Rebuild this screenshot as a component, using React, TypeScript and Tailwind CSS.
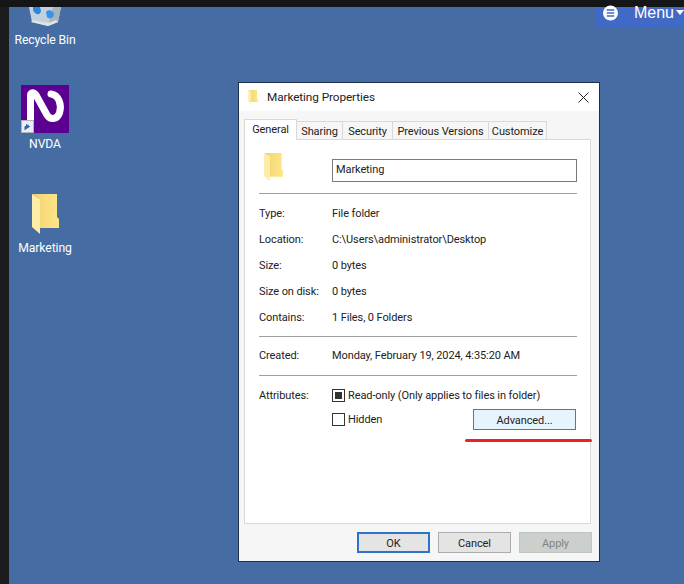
import { useId } from 'react';

const FolderIcon = ({ className }: { className: string }) => {
  const id = useId();
  return (
    <svg viewBox="0 0 27 40" className={className}>
      <defs>
        <linearGradient id={id} x1="0" x2="1" y1="0" y2="0">
          <stop offset="0" stopColor="#f0cd68" />
          <stop offset="0.45" stopColor="#f8dc7c" />
          <stop offset="1" stopColor="#fde588" />
        </linearGradient>
      </defs>
      <path d="M0 0H25V23L27 25V34H8V5Z" fill={`url(#${id})`} />
      <path d="M0 0L8 5V40L0 33Z" fill="#fdeda6" />
    </svg>
  );
};

const NvdaIcon = () => (
  <svg viewBox="0 0 48 48" className="w-12 h-12">
    <rect width="48" height="48" fill="#5c0091" />
    <path
      d="M9.5 36V10C9.5 7 13 7 15 10L26 30C29 35 36 35 38.5 28C41 20 38 10 30 9"
      fill="none"
      stroke="#fff"
      strokeWidth="7"
      strokeLinecap="round"
      strokeLinejoin="round"
    />
    <rect x="0.5" y="35.5" width="12" height="12" fill="#e8eef4" stroke="#b5b5b5" />
    <path d="M4 45V41.5H7M5.5 39.5L8.5 41.5L5.5 43.5Z" fill="#2f62b5" stroke="#2f62b5" />
  </svg>
);

const RecycleIcon = () => (
  <svg viewBox="0 0 32 19" className="w-[32px] h-[19px]">
    <path d="M0 0H32L29 15L19 19L3 15Z" fill="#c3d1dc" />
    <path d="M19 19L29 15L32 0H24Z" fill="#a5b4bf" />
    <path d="M2 15L19 19L29 15L27 13L19 16L4 13Z" fill="#dfe3e2" />
    <path d="M4 0H11L12 4C11 9 6 8 4 3Z" fill="#2e86e0" />
    <path d="M17 5C19 2 24 3 25 7C25 11 20 13 18 10Z" fill="#3c92e6" />
  </svg>
);

const DeskItem = ({ label, pos, gap, children }: { label: string; pos: string; gap: string; children: React.ReactNode }) => (
  <div className={`absolute flex flex-col items-center w-[90px] text-white text-[12.2px] ${pos}`}>
    {children}
    <span className={`leading-[16px] ${gap}`}>{label}</span>
  </div>
);

const rows = [
  ['Type:', 'File folder'],
  ['Location:', 'C:\\Users\\administrator\\Desktop'],
  ['Size:', '0 bytes'],
  ['Size on disk:', '0 bytes'],
  ['Contains:', '1 Files, 0 Folders'],
];

const tabs = [
  ['Sharing', 'w-[46px]'],
  ['Security', 'w-[50px]'],
  ['Previous Versions', 'w-[96px]'],
  ['Customize', 'w-[58px]'],
];

const Row = ({ label, value }: { label: string; value: string }) => (
  <div className="flex items-center h-[26px] pt-[2px]">
    <span className="w-[73px] shrink-0">{label}</span>
    <span>{value}</span>
  </div>
);

export default function App() {
  return (
    <div
      className="w-[684px] h-[584px] flex flex-col overflow-hidden bg-[#17181a] text-[#222] text-[11px] tracking-[-0.1px]"
      style={{ fontFamily: 'Roboto, "Noto Sans", sans-serif' }}
    >
      <div className="h-[7px] shrink-0 bg-[#141517]" />
      <div className="flex flex-1">
        <div className="w-[9px] shrink-0 bg-[#1b1c1e]" />
        <div className="relative flex-1 bg-[#466da3]">
          <DeskItem label="Recycle Bin" pos="left-[-9px] top-0" gap="mt-[6px]">
            <RecycleIcon />
          </DeskItem>

          <DeskItem label="NVDA" pos="left-[-9px] top-[78px]" gap="mt-[3px]">
            <NvdaIcon />
          </DeskItem>

          <DeskItem label="Marketing" pos="left-[-9px] top-[187px]" gap="mt-[6px]">
            <FolderIcon className="w-[27px] h-[40px]" />
          </DeskItem>

          {/* Menu tab */}
          <div className="absolute right-0 top-0 w-[89px] h-[20px] bg-[#4169c6] flex items-start pl-[8px] text-white tracking-normal">
            <svg viewBox="0 0 16 16" className="w-[16px] h-[16px] mt-[-2px]">
              <circle cx="8" cy="8" r="8" fill="#fff" />
              <path d="M4 4.8H12M4 8H12M4 11.2H12" stroke="#4169c6" strokeWidth="1.6" />
            </svg>
            <span
              className="ml-[16px] mt-[-4px] text-[16px] leading-[20px]"
              style={{ fontFamily: '"Liberation Sans", sans-serif' }}
            >
              Menu
            </span>
            <span className="ml-[2px] mt-[3px] w-0 h-0 border-x-[4px] border-x-transparent border-t-[5px] border-t-white" />
          </div>

          {/* Properties window */}
          <div className="absolute left-[229px] top-[75px] w-[362px] h-[480px] flex flex-col border border-[#1e2f4a] bg-[#f6f6f6]">
            <div className="h-[28px] shrink-0 flex items-center bg-white pl-[9px] pr-[10px]">
              <FolderIcon className="w-[10px] h-[14px]" />
              <span className="ml-[9px] pt-[2px] text-[11.8px] text-[#222]">Marketing Properties</span>
              <svg viewBox="0 0 11 11" className="w-[11px] h-[11px] ml-auto">
                <path d="M0.5 0.5L10.5 10.5M10.5 0.5L0.5 10.5" stroke="#222" strokeWidth="1" />
              </svg>
            </div>

            <div className="flex flex-col flex-1 px-[5px] pt-[8px]">
              <div className="flex items-end h-[20px] relative z-10">
                <div className="w-[53px] h-[21px] mb-[-1px] bg-white border border-b-0 border-[#d9d9d9] text-center leading-[19px]">
                  General
                </div>
                {tabs.map(([name, w]) => (
                  <div
                    key={name}
                    className={`${w} h-[18px] border border-l-0 border-b-0 border-[#d9d9d9] bg-[#f6f6f6] text-center leading-[20px] whitespace-nowrap`}
                  >
                    {name}
                  </div>
                ))}
              </div>

              <div className="w-[347px] h-[385px] bg-white border border-[#d9d9d9] pl-[14px] pr-[13px] relative">
                <div className="flex items-center h-[53px]">
                  <div className="w-[73px] shrink-0 pl-[5px]">
                    <FolderIcon className="w-[19px] h-[28px]" />
                  </div>
                  <div className="w-[246px] h-[23px] mt-[7px] border border-[#7a7a7a] pl-[3px] leading-[19px]">Marketing</div>
                </div>
                <div className="h-px bg-[#a0a0a0] w-[318px]" />

                <div className="py-[6px]">
                  {rows.map(([l, v]) => (
                    <Row key={l} label={l} value={v} />
                  ))}
                </div>
                <div className="h-px bg-[#a0a0a0] w-[318px]" />

                <div className="pt-[5px] pb-[7px]">
                  <Row label="Created:" value="Monday, February 19, 2024, 4:35:20 AM" />
                </div>
                <div className="h-px bg-[#a0a0a0] w-[318px]" />

                <div className="flex pt-[11px]">
                  <span className="w-[73px] shrink-0 leading-[18px]">Attributes:</span>
                  <div className="flex flex-col">
                    <div className="flex items-center h-[16px]">
                      <span className="w-[13px] h-[13px] border border-[#333] flex items-center justify-center">
                        <span className="w-[7px] h-[7px] bg-[#333]" />
                      </span>
                      <span className="ml-[3px] pt-[2px]">Read-only (Only applies to files in folder)</span>
                    </div>
                    <div className="flex items-start mt-[6px] w-[244px]">
                      <div className="flex items-center h-[16px] mt-[2px]">
                        <span className="w-[13px] h-[13px] border border-[#333]" />
                        <span className="ml-[3px] pt-[2px]">Hidden</span>
                      </div>
                      <div className="ml-auto w-[103px] h-[21px] border border-[#2f80d8] bg-[#e6f5fd] text-center leading-[21px]">
                        Advanced...
                      </div>
                    </div>
                  </div>
                </div>

                {/* red annotation stroke */}
                <div className="absolute left-[220px] top-[299px] w-[127px] h-[3px] bg-[#ec2029] rounded-full" />
              </div>

              <div className="flex justify-end gap-[8px] pt-[8px] pr-[2px] w-[350px]">
                <div className="w-[73px] h-[21px] border-2 border-[#2f73c9] bg-[#e4e4e4] text-center leading-[19px]">OK</div>
                <div className="w-[73px] h-[21px] border border-[#adadad] bg-[#e4e4e4] text-center leading-[21px]">Cancel</div>
                <div className="w-[73px] h-[21px] border border-[#bfc5c2] bg-[#ccd0cd] text-[#838383] text-center leading-[21px]">Apply</div>
              </div>
            </div>
          </div>
        </div>
      </div>
    </div>
  );
}
